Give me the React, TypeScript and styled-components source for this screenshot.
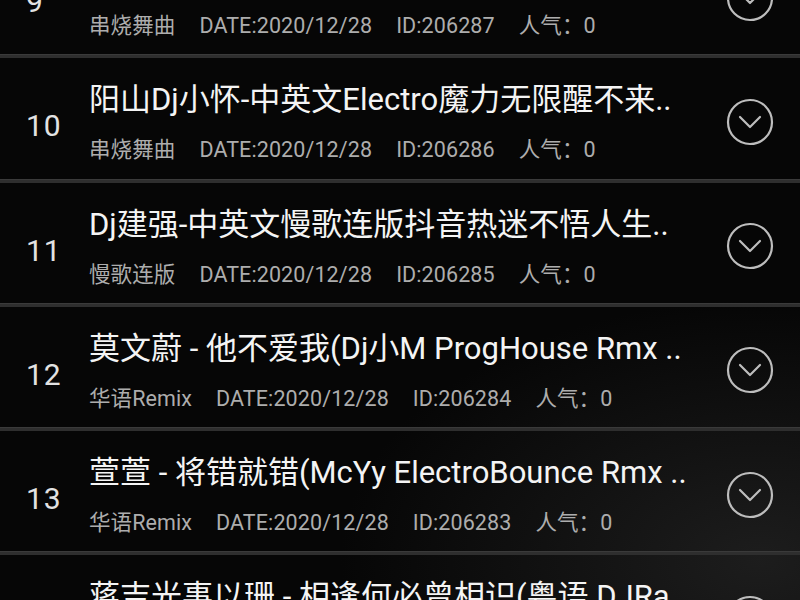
import React from 'react';
import styled, { createGlobalStyle } from 'styled-components';

const GlobalStyle = createGlobalStyle`
  html, body {
    margin: 0;
    padding: 0;
    background: #050505;
  }
  body {
    font-family: "Roboto", "Noto Sans CJK SC", "Noto Sans", sans-serif;
  }
`;

const Screen = styled.div`
  width: 800px;
  height: 600px;
  overflow: hidden;
  background:
    radial-gradient(ellipse 420px 260px at 760px 560px, rgba(44, 44, 44, 0.6), rgba(0, 0, 0, 0) 100%),
    #060606;
`;

// the list is scrolled: row 9 is mostly above the top edge
const List = styled.ul`
  list-style: none;
  margin: -66px 0 0 0;
  padding: 0;
`;

const Row = styled.li`
  display: flex;
  align-items: center;
  height: 121.25px;
  border-bottom: 3px solid #2e2e2e;
  box-shadow: inset 0 -1px 0 #3a3a3a;
  padding: 0 26px 0 0;
`;

const Index = styled.div`
  width: 89px;
  flex-shrink: 0;
  padding-left: 26px;
  box-sizing: border-box;
  margin-top: 14px;
  color: #e2e2e2;
  font-size: 30px;
  letter-spacing: 1px;
`;

const Info = styled.div`
  flex: 1;
  min-width: 0;
  margin-top: 7px;
  display: flex;
  flex-direction: column;
  gap: 20px;
`;

const Title = styled.div`
  color: #f4f4f4;
  font-size: 31px;
  white-space: nowrap;
  overflow: hidden;
  line-height: 36px;
`;

const Meta = styled.div`
  display: flex;
  gap: 24px;
  color: #adadad;
  font-size: 21.5px;
  letter-spacing: 0.1px;
  line-height: 24px;
  white-space: nowrap;
`;

const ToggleButton = styled.button`
  width: 48px;
  height: 48px;
  flex-shrink: 0;
  padding: 0;
  border: none;
  background: transparent;
  margin-top: 6px;
  display: flex;
  align-items: center;
  justify-content: center;
`;

type Song = {
  no: number;
  title: string;
  genre: string;
  id: number;
};

const songs: Song[] = [
  { no: 9, title: '阳山Dj小怀-中英文串烧舞曲..', genre: '串烧舞曲', id: 206287 },
  { no: 10, title: '阳山Dj小怀-中英文Electro魔力无限醒不来..', genre: '串烧舞曲', id: 206286 },
  { no: 11, title: 'Dj建强-中英文慢歌连版抖音热迷不悟人生..', genre: '慢歌连版', id: 206285 },
  { no: 12, title: '莫文蔚 - 他不爱我(Dj小M ProgHouse Rmx ..', genre: '华语Remix', id: 206284 },
  { no: 13, title: '萱萱 - 将错就错(McYy ElectroBounce Rmx ..', genre: '华语Remix', id: 206283 },
  { no: 14, title: '蒋吉光事以珊 - 相逢何必曾相识(粤语 DJRa..', genre: '粤语Remix', id: 206282 },
];

function ChevronCircle() {
  return (
    <svg width="48" height="48" viewBox="0 0 48 48" fill="none">
      <circle cx="24" cy="24" r="22" stroke="#bdbdbd" strokeWidth="2.2" />
      <path d="M14 19 L24 29 L34 19" stroke="#bdbdbd" strokeWidth="2.2" strokeLinecap="round" strokeLinejoin="round" />
    </svg>
  );
}

export default function App() {
  return (
    <>
      <GlobalStyle />
      <Screen>
        <List>
          {songs.map((song) => (
            <Row key={song.id}>
              <Index>{song.no}</Index>
              <Info>
                <Title>{song.title}</Title>
                <Meta>
                  <span>{song.genre}</span>
                  <span>DATE:2020/12/28</span>
                  <span>ID:{song.id}</span>
                  <span>人气：0</span>
                </Meta>
              </Info>
              <ToggleButton aria-label="展开">
                <ChevronCircle />
              </ToggleButton>
            </Row>
          ))}
        </List>
      </Screen>
    </>
  );
}
